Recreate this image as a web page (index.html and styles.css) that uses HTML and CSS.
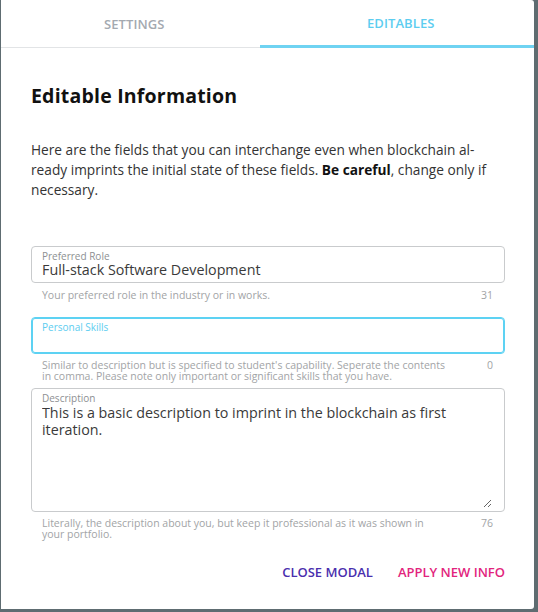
FILE: index.html
```html
<!DOCTYPE html>
<html>
<head>
<meta charset="utf-8">
<link rel="stylesheet" href="styles.css">
</head>
<body>
<div class="modal">
  <div class="tabs">
    <div class="tab">SETTINGS</div>
    <div class="tab active">EDITABLES</div>
  </div>
  <div class="content">
    <h2 class="title">Editable Information</h2>
    <p class="intro">Here are the fields that you can interchange even when blockchain al-<br>ready imprints the initial state of these fields. <b>Be careful</b>, change only if<br>necessary.</p>

    <div class="field">
      <div class="label">Preferred Role</div>
      <div class="value">Full-stack Software Development</div>
    </div>
    <div class="helper"><span>Your preferred role in the industry or in works.</span><span class="count">31</span></div>

    <div class="field focused">
      <div class="label">Personal Skills</div>
      <div class="value"></div>
    </div>
    <div class="helper multi"><span>Similar to description but is specified to student's capability. Seperate the contents<br>in comma. Please note only important or significant skills that you have.</span><span class="count">0</span></div>

    <div class="field area">
      <div class="label">Description</div>
      <textarea class="textarea">This is a basic description to imprint in the blockchain as first iteration.</textarea>
    </div>
    <div class="helper multi"><span>Literally, the description about you, but keep it professional as it was shown in<br>your portfolio.</span><span class="count">76</span></div>

    <div class="actions">
      <span class="btn close">CLOSE MODAL</span>
      <span class="btn apply">APPLY NEW INFO</span>
    </div>
  </div>
</div>
</body>
</html>
```
FILE: styles.css
```css
html, body {
  margin: 0;
  padding: 0;
}
body {
  background: #5e6c71;
  width: 538px;
  height: 612px;
  overflow: hidden;
  font-family: "Open Sans", "DejaVu Sans", sans-serif;
}
.modal {
  margin-left: 1px;
  width: 533px;
  height: 609px;
  background: #ffffff;
  border-radius: 0 3px 3px 0;
  box-sizing: border-box;
}
.tabs {
  display: flex;
  height: 48px;
  border-bottom: 1px solid #e2e4e6;
  box-sizing: border-box;
}
.tab {
  flex: 1;
  display: flex;
  align-items: center;
  justify-content: center;
  font-size: 13px;
  font-weight: 600;
  color: #a4a9b0;
  letter-spacing: 0.1px;
  padding-top: 1px;
}
.tab.active {
  color: #5ccdf0;
  border-bottom: 3px solid #6fd3f2;
  margin-bottom: -1px;
  margin-left: -8px;
  padding-left: 8px;
}
.content {
  padding: 34px 29px 0 30px;
  display: flex;
  flex-direction: column;
}
.title {
  margin: 0;
  font-size: 19.5px;
  line-height: 28px;
  font-weight: 700;
  letter-spacing: 0.2px;
  color: #111;
}
.intro {
  margin: 30px 0 0;
  font-size: 13.7px;
  line-height: 20px;
  color: #333;
}
.intro b {
  color: #111;
}
.field {
  margin-top: 46px;
  border: 1px solid #c9cbcd;
  border-radius: 4px;
  padding: 3px 10px 4px;
}
.field.focused {
  margin-top: 16px;
  border-color: #5dd2f3;
  box-shadow: inset 0 0 0 1px #5dd2f3;
}
.field.area {
  margin-top: 6px;
  padding-right: 12px;
  padding-bottom: 3px;
}
.label {
  font-size: 10px;
  line-height: 12px;
  color: #8d8f92;
}
.focused .label {
  color: #5dcdf0;
}
.value {
  font-size: 14.3px;
  line-height: 16px;
  height: 16px;
  color: #3a3a3a;
}
.textarea {
  display: block;
  width: 100%;
  box-sizing: border-box;
  height: 104px;
  border: none;
  outline: none;
  padding: 0;
  margin: 0;
  font-family: inherit;
  font-size: 14.3px;
  line-height: 17px;
  color: #3a3a3a;
  background: transparent;
}
.helper {
  display: flex;
  justify-content: space-between;
  align-items: flex-start;
  margin-top: 6px;
  padding: 0 12px 0 11px;
  font-size: 10.5px;
  line-height: 12px;
  color: #a2a4a6;
}
.helper.multi {
  line-height: 11px;
}
.count {
  flex: none;
  margin-left: 8px;
}
.actions {
  display: flex;
  justify-content: flex-end;
  gap: 25px;
  margin-top: 14px;
  height: 36px;
  align-items: center;
}
.btn {
  font-size: 13px;
  font-weight: 600;
}
.btn.close {
  color: #4a2fae;
}
.btn.apply {
  color: #e2247d;
}
```
